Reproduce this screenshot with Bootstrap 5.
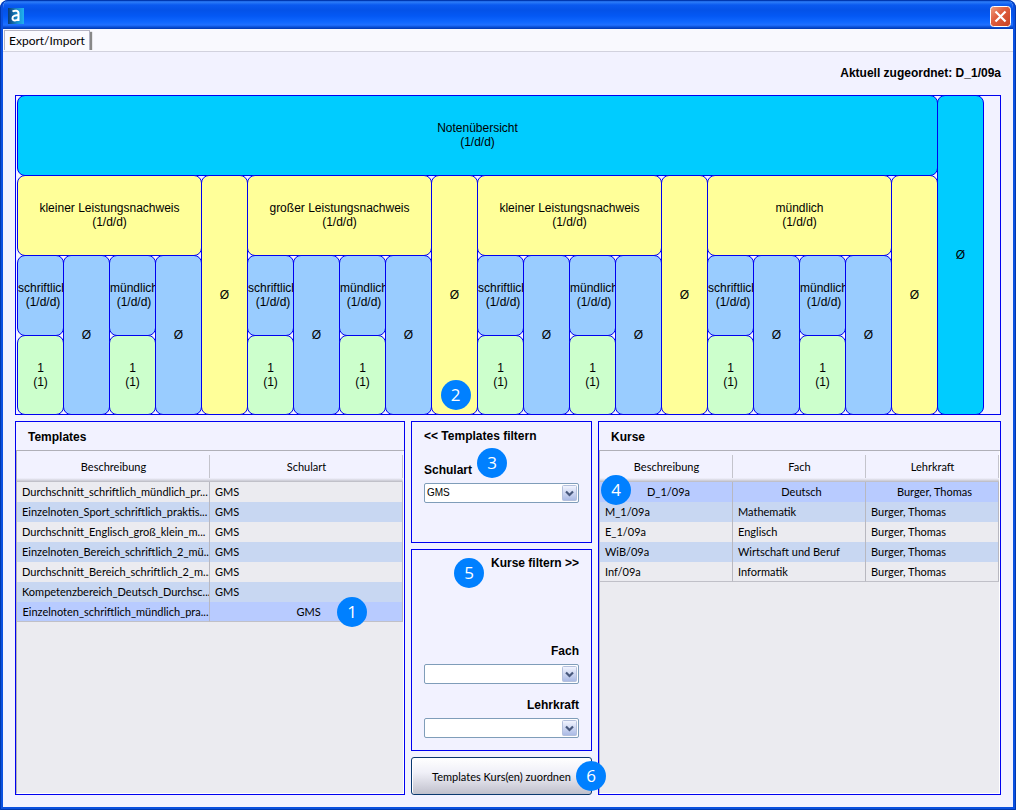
<!DOCTYPE html>
<html lang="de">
<head>
<meta charset="utf-8">
<meta name="viewport" content="width=device-width, initial-scale=1">
<title>Export/Import</title>
<link href="https://cdn.jsdelivr.net/npm/bootstrap@5.3.0/dist/css/bootstrap.min.css" rel="stylesheet">
<style>
:root { --line: #0000f0; --face: #f2f2ff; --ui: Lato, "Open Sans", sans-serif; --arial: "Liberation Sans", Arial, sans-serif; }
body { background: #fff; color: #000; font: 12px/14px var(--arial); }
.window { min-height: 100vh; background: var(--face); border: 3px solid #0a50e0; border-top: 0; border-radius: 8px 8px 0 0; outline: 1px solid #0038b0; outline-offset: -1px; overflow: hidden; }
.titlebar { height: 29px; margin: 0 -3px; padding: 3px 5px 0 8px; background: linear-gradient(#0040c8 0, #2c7cf8 2px, #0a5af0 5px, #0452e8 10px, #0458f4 16px, #1068ff 22px, #2070ff 25px, #0a50d8 27px, #0038b0 29px); }
.titlebar svg { display: block; }
.close-btn { padding: 0; border: 0; background: none; }
.tabstrip { height: 23px; background: #f9f9fe; border-bottom: 1px solid #d2d2de; }
.tab-item { height: 20px; margin: 1px 0 0 1px; padding: 0 4px; border: 1px solid #b4b4c4; border-bottom: 0; background: #fafaff; font: 12px/20px var(--ui); color: #000; text-decoration: none; box-shadow: 2px 2px 1px #888; clip-path: inset(0 -4px 0 0); }
.content-area { padding: 14px 12px 12px; }
.assigned { margin-bottom: 15px; font-size: 12px; line-height: 14px; }
.panel { border: 1px solid var(--line); min-width: 0; }
.heading { font-size: 12px; line-height: 14px; font-weight: bold; margin: 0; }

/* grade tree */
.tree { display: grid; grid-template-columns: repeat(21, minmax(0, 1fr)); grid-template-rows: repeat(4, 80px); padding: 0 17px 0 1px; margin-bottom: 6px; border-top: 0; border-bottom: 0; box-shadow: inset 0 1px var(--line), inset 0 -1px var(--line); }
.node { display: flex; border: 1px solid var(--line); border-radius: 8px; margin: 0 -1px -1px 0; padding-bottom: 2px; white-space: nowrap; overflow: hidden; text-align: center; }
.node > span { margin: auto; }
.tree > .last { margin-bottom: 0; padding-bottom: 0; }
.cyan { background: #00ccff; }
.yellow { background: #ffff99; }
.azure { background: #99ccff; }
.mint { background: #ccffcc; }
.wide-20 { grid-column: span 20; }
.wide-4 { grid-column: span 4; }
.tall-4 { grid-row: span 4; }
.tall-3 { grid-row: span 3; }
.tall-2 { grid-row: span 2; }

/* lower area */
.lower { display: grid; grid-template-columns: 390fr 181px 403fr; gap: 6px; min-height: 374px; }
.list-title { padding: 8px 12px 6px; }
.grid-back { background: #ebebf0; border-left: 1px solid #b0b0b8; border-top: 1px solid #b0b0b8; border-bottom: 1px solid #fff; padding-right: 1px; box-shadow: inset -1px 0 #fff; }
.grid-table { width: 100%; table-layout: fixed; border-collapse: separate; border-spacing: 0; font: 11px/20px var(--ui); }
.grid-table th { height: 31px; padding: 0; font-weight: normal; text-align: center; background: linear-gradient(#c4c4cc, #c4c4cc) right 4px / 1px 23px no-repeat, linear-gradient(var(--face) 27px, #d8d8e2 29px, #b8b8c0 31px); }
.grid-table td { height: 20px; padding: 0 0 0 5px; white-space: nowrap; overflow: hidden; border-right: 1px solid #b8b8c0; }
.grid-table tr:nth-child(even) td { background: #c8d7f2; }
.grid-table tr.picked td { background: #b8cbff; text-align: center; }
.grid-table tbody tr:last-child td { border-bottom: 1px solid #c0c0c8; line-height: 18px; }

.filter-a { padding: 7px 12px; height: 122px; }
.filter-b { padding: 6px 12px; height: 202px; }
.filter-a .form-part { margin-top: 20px; }
.filter-b .form-part { margin-top: 74px; }
.filter-b .form-part + .form-part { margin-top: 14px; }
.form-part label { display: block; font-weight: bold; margin-bottom: 6px; }
.combo { position: relative; }
.combo select { display: block; width: 100%; height: 20px; padding: 0 20px 0 2px; appearance: none; background: #fff; color: #000; border: 1px solid #7f9db9; border-radius: 2px; font: 10px/18px var(--arial); }
.combo svg { position: absolute; right: 0; top: 1px; pointer-events: none; }
.assign { position: relative; flex: 1; min-height: 38px; padding: 1px 0 0; border: 1px solid #0a3870; border-radius: 3px; background: linear-gradient(#fff, #f0f0f8 40%, #c0c0cc); box-shadow: inset 1px 0 #fff; font: 11px/18px var(--ui); color: #000; }

/* step markers */
.marker { position: absolute; width: 30px; height: 30px; border-radius: 50%; background: #0080ff; color: #fff; font: 17px/29px "Open Sans", sans-serif; text-align: center; z-index: 2; }
.m1 { left: 321px; top: 175px; }
.m2 { left: calc(45.3% - 21px); bottom: 5px; }
.m3 { left: 65px; top: 26px; }
.m4 { left: 2px; top: 53px; }
.m5 { left: 42px; top: 8px; }
.m6 { right: -14px; top: 4px; }
</style>
</head>
<body>
<div class="window">
  <header class="titlebar d-flex justify-content-between align-items-center">
    <svg width="16" height="16" viewBox="0 0 16 16" aria-hidden="true"><defs><linearGradient id="lg"><stop offset="0" stop-color="#0a3c78"/><stop offset=".6" stop-color="#1890d0"/><stop offset="1" stop-color="#20b0f0"/></linearGradient></defs><rect width="16" height="16" fill="url(#lg)"/><path d="M4.500 3.500C7 2 10.500 2.500 10.500 5.500V13M10.500 7.500C7 7 4.500 8 4.500 10.200C4.500 13.500 9 13 10.500 10.500" fill="none" stroke="#fff" stroke-width="2"/></svg>
    <button class="close-btn" type="button" aria-label="Schließen"><svg width="21" height="21" viewBox="0 0 21 21"><defs><linearGradient id="rg" x2="1" y2="1"><stop offset="0" stop-color="#f0a080"/><stop offset=".4" stop-color="#e06040"/><stop offset="1" stop-color="#c84020"/></linearGradient></defs><rect x=".5" y=".5" width="20" height="20" rx="3" fill="url(#rg)" stroke="#fff"/><path d="M5.500 5.500l10 10M15.500 5.500l-10 10" stroke="#fff" stroke-width="2.200"/></svg></button>
  </header>
  <nav class="tabstrip d-flex"><a class="tab-item" href="#">Export/Import</a></nav>
  <main class="content-area">
    <p class="assigned text-end fw-bold">Aktuell zugeordnet: D_1/09a</p>

    <section class="position-relative">
      <div class="panel tree">
        <div class="node cyan wide-20"><span>Notenübersicht<br>(1/d/d)</span></div>
        <div class="node cyan tall-4 last"><span>Ø</span></div>

        <div class="node yellow wide-4"><span>kleiner Leistungsnachweis<br>(1/d/d)</span></div>
        <div class="node yellow tall-3 last"><span>Ø</span></div>
        <div class="node yellow wide-4"><span>großer Leistungsnachweis<br>(1/d/d)</span></div>
        <div class="node yellow tall-3 last"><span>Ø</span></div>
        <div class="node yellow wide-4"><span>kleiner Leistungsnachweis<br>(1/d/d)</span></div>
        <div class="node yellow tall-3 last"><span>Ø</span></div>
        <div class="node yellow wide-4"><span>mündlich<br>(1/d/d)</span></div>
        <div class="node yellow tall-3 last"><span>Ø</span></div>

        <div class="node azure"><span>schriftlich<br>(1/d/d)</span></div>
        <div class="node azure tall-2 last"><span>Ø</span></div>
        <div class="node azure"><span>mündlich<br>(1/d/d)</span></div>
        <div class="node azure tall-2 last"><span>Ø</span></div>
        <div class="node azure"><span>schriftlich<br>(1/d/d)</span></div>
        <div class="node azure tall-2 last"><span>Ø</span></div>
        <div class="node azure"><span>mündlich<br>(1/d/d)</span></div>
        <div class="node azure tall-2 last"><span>Ø</span></div>
        <div class="node azure"><span>schriftlich<br>(1/d/d)</span></div>
        <div class="node azure tall-2 last"><span>Ø</span></div>
        <div class="node azure"><span>mündlich<br>(1/d/d)</span></div>
        <div class="node azure tall-2 last"><span>Ø</span></div>
        <div class="node azure"><span>schriftlich<br>(1/d/d)</span></div>
        <div class="node azure tall-2 last"><span>Ø</span></div>
        <div class="node azure"><span>mündlich<br>(1/d/d)</span></div>
        <div class="node azure tall-2 last"><span>Ø</span></div>

        <div class="node mint last"><span>1<br>(1)</span></div>
        <div class="node mint last"><span>1<br>(1)</span></div>
        <div class="node mint last"><span>1<br>(1)</span></div>
        <div class="node mint last"><span>1<br>(1)</span></div>
        <div class="node mint last"><span>1<br>(1)</span></div>
        <div class="node mint last"><span>1<br>(1)</span></div>
        <div class="node mint last"><span>1<br>(1)</span></div>
        <div class="node mint last"><span>1<br>(1)</span></div>
      </div>
      <span class="marker m2">2</span>
    </section>

    <div class="lower">
      <section class="panel d-flex flex-column position-relative">
        <h2 class="heading list-title">Templates</h2>
        <div class="grid-back flex-grow-1">
          <table class="grid-table">
            <thead><tr><th>Beschreibung</th><th>Schulart</th></tr></thead>
            <tbody>
              <tr><td>Durchschnitt_schriftlich_mündlich_pr...</td><td>GMS</td></tr>
              <tr><td>Einzelnoten_Sport_schriftlich_praktis...</td><td>GMS</td></tr>
              <tr><td>Durchschnitt_Englisch_groß_klein_m...</td><td>GMS</td></tr>
              <tr><td>Einzelnoten_Bereich_schriftlich_2_mü...</td><td>GMS</td></tr>
              <tr><td>Durchschnitt_Bereich_schriftlich_2_m...</td><td>GMS</td></tr>
              <tr><td>Kompetenzbereich_Deutsch_Durchsc...</td><td>GMS</td></tr>
              <tr class="picked"><td>Einzelnoten_schriftlich_mündlich_pra...</td><td>GMS</td></tr>
            </tbody>
          </table>
        </div>
        <span class="marker m1">1</span>
      </section>

      <div class="d-flex flex-column" style="gap:6px">
        <section class="panel filter-a position-relative">
          <h2 class="heading">&lt;&lt; Templates filtern</h2>
          <div class="form-part">
            <label for="schulart">Schulart</label>
            <div class="combo"><select id="schulart"><option>GMS</option></select><svg width="18" height="18" viewBox="0 0 18 18"><defs><linearGradient id="cg" x2="0" y2="1"><stop offset="0" stop-color="#f4f6ff"/><stop offset="1" stop-color="#a8b8e4"/></linearGradient></defs><rect x="1.500" y="1.500" width="14" height="15" rx="1" fill="url(#cg)" stroke="#b4c0dc"/><path d="M5 7.500l3.500 3.500L12 7.500" fill="none" stroke="#48587c" stroke-width="2.200"/></svg></div>
          </div>
          <span class="marker m3">3</span>
        </section>
        <section class="panel filter-b position-relative text-end">
          <h2 class="heading">Kurse filtern &gt;&gt;</h2>
          <div class="form-part">
            <label for="fach">Fach</label>
            <div class="combo"><select id="fach"><option></option></select><svg width="18" height="18" viewBox="0 0 18 18"><rect x="1.500" y="1.500" width="14" height="15" rx="1" fill="url(#cg)" stroke="#b4c0dc"/><path d="M5 7.500l3.500 3.500L12 7.500" fill="none" stroke="#48587c" stroke-width="2.200"/></svg></div>
          </div>
          <div class="form-part">
            <label for="lehrkraft">Lehrkraft</label>
            <div class="combo"><select id="lehrkraft"><option></option></select><svg width="18" height="18" viewBox="0 0 18 18"><rect x="1.500" y="1.500" width="14" height="15" rx="1" fill="url(#cg)" stroke="#b4c0dc"/><path d="M5 7.500l3.500 3.500L12 7.500" fill="none" stroke="#48587c" stroke-width="2.200"/></svg></div>
          </div>
          <span class="marker m5">5</span>
        </section>
        <div class="position-relative d-flex flex-grow-1">
          <button type="button" class="assign">Templates Kurs(en) zuordnen</button>
          <span class="marker m6">6</span>
        </div>
      </div>

      <section class="panel d-flex flex-column position-relative">
        <h2 class="heading list-title">Kurse</h2>
        <div class="grid-back flex-grow-1">
          <table class="grid-table">
            <thead><tr><th>Beschreibung</th><th>Fach</th><th>Lehrkraft</th></tr></thead>
            <tbody>
              <tr class="picked"><td>D_1/09a</td><td>Deutsch</td><td>Burger, Thomas</td></tr>
              <tr><td>M_1/09a</td><td>Mathematik</td><td>Burger, Thomas</td></tr>
              <tr><td>E_1/09a</td><td>Englisch</td><td>Burger, Thomas</td></tr>
              <tr><td>WiB/09a</td><td>Wirtschaft und Beruf</td><td>Burger, Thomas</td></tr>
              <tr><td>Inf/09a</td><td>Informatik</td><td>Burger, Thomas</td></tr>
            </tbody>
          </table>
        </div>
        <span class="marker m4">4</span>
      </section>
    </div>
  </main>
</div>
<script src="https://cdn.jsdelivr.net/npm/bootstrap@5.3.0/dist/js/bootstrap.bundle.min.js"></script>
</body>
</html>
